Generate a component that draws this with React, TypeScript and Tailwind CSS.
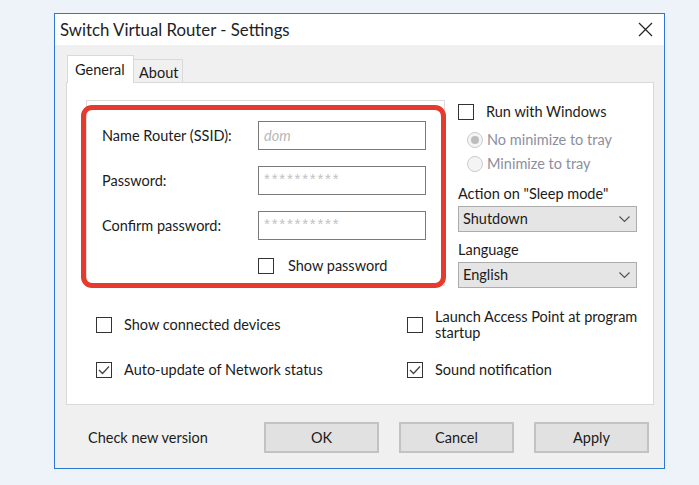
import { ReactNode } from "react";

const Checkbox = ({ checked = false }: { checked?: boolean }) => (
  <span className="w-[16px] h-[16px] shrink-0 border border-[#333333] bg-white flex items-center justify-center">
    {checked && (
      <svg width="12" height="10" viewBox="0 0 12 10" fill="none">
        <path d="M1 5 L4.5 8.5 L11 1.5" stroke="#444444" strokeWidth="1.3" />
      </svg>
    )}
  </span>
);

const Radio = ({ selected = false, label }: { selected?: boolean; label: string }) => (
  <div className="h-[24px] flex items-center pl-[9px] text-[#8d8f9e]">
    <span className="w-[16px] h-[16px] rounded-full border border-[#cccccc] bg-[#f4f4f4] flex items-center justify-center">
      {selected && <span className="w-[8px] h-[8px] rounded-full bg-[#bcbcbc]" />}
    </span>
    <span className="ml-[4px]">{label}</span>
  </div>
);

const Field = ({ label, value, italic }: { label: string; value: string; italic?: boolean }) => (
  <div className="flex items-center h-[29px]">
    <span className="w-[156px]">{label}</span>
    <div className="w-[168px] h-[29px] border border-[#7a7a7a] bg-white flex items-center px-[5px]">
      {italic ? (
        <span className="italic text-[#b8b8b8]">{value}</span>
      ) : (
        <span className="font-['Liberation_Sans',sans-serif] text-[15px] text-[#c2c2c2] tracking-[1.8px] -mt-[2px]">{value}</span>
      )}
    </div>
  </div>
);

const Select = ({ value }: { value: string }) => (
  <div className="w-[179px] h-[26px] border border-[#acacac] bg-[#e5e5e5] flex items-center justify-between pl-[4px] pr-[6px]">
    <span>{value}</span>
    <svg width="11" height="7" viewBox="0 0 11 7" fill="none">
      <path d="M0.5 0.5 L5.5 5.5 L10.5 0.5" stroke="#555555" strokeWidth="1.2" />
    </svg>
  </div>
);

const Option = ({ checked, children }: { checked?: boolean; children: ReactNode }) => (
  <div className="flex items-center gap-[12px]">
    <Checkbox checked={checked} />
    <span className="leading-[16px]">{children}</span>
  </div>
);

const Button = ({ children }: { children: ReactNode }) => (
  <button className="w-[115px] h-[31px] border-2 border-[#c2c2c2] bg-[#e1e1e1] text-[#1a1a1a]">{children}</button>
);

export default function App() {
  return (
    <div className="min-h-screen bg-[#eef3fa] pt-[13px] pl-[54px] text-[14.5px] text-[#1b1b1b] font-['Lato','Noto_Sans',sans-serif]">
      <div className="w-[611px] h-[456px] border border-[#2b78d0] bg-[#f0f0f0] flex flex-col">
        {/* title bar */}
        <div className="h-[31px] bg-white flex items-center justify-between pl-[5px] pr-[11px]">
          <span className="text-[16.8px] text-[#222222]">Switch Virtual Router - Settings</span>
          <svg width="15" height="15" viewBox="0 0 15 15" fill="none">
            <path d="M1 1 L14 14 M14 1 L1 14" stroke="#222222" strokeWidth="1.2" />
          </svg>
        </div>

        <div className="pl-[11px] pr-[10px] pt-[10px]">
          {/* tabs */}
          <div className="flex items-end h-[27px] pl-[1px]">
            <div className="relative z-10 w-[67px] h-[28px] -mb-px bg-white border border-b-0 border-[#d9d9d9] pl-[7px] pt-[3px]">
              General
            </div>
            <div className="w-[49px] h-[23px] border border-l-0 border-b-0 border-[#d9d9d9] bg-[#f0f0f0] pl-[5px] pt-[2px]">
              About
            </div>
          </div>

          {/* tab page */}
          <div className="h-[323px] bg-white border border-[#d9d9d9]">
            <div className="flex pt-[17px] pl-[19px]">
              {/* network group */}
              <div className="relative w-[359px] h-[186px] border border-[#dcdcdc]">
                <div className="flex flex-col gap-[16px] pl-[15px] pt-[20px]">
                  <Field label="Name Router (SSID):" value="dom" italic />
                  <Field label="Password:" value="**********" />
                  <Field label="Confirm password:" value="**********" />
                  <div className="flex items-center pl-[156px] -mt-[1px]">
                    <Checkbox />
                    <span className="ml-[14px]">Show password</span>
                  </div>
                </div>
                <div className="absolute left-[-6px] top-[4px] w-[365px] h-[183px] border-[5px] border-[#e53a2d] rounded-[11px]" />
              </div>

              {/* startup & misc */}
              <div className="ml-[13px] flex flex-col">
                <div className="h-[24px] flex items-center">
                  <Checkbox />
                  <span className="ml-[12px]">Run with Windows</span>
                </div>
                <div className="mt-[4px]">
                  <Radio selected label="No minimize to tray" />
                  <Radio label="Minimize to tray" />
                </div>
                <div className="h-[24px] mt-[6px] flex items-center">Action on "Sleep mode"</div>
                <Select value="Shutdown" />
                <div className="h-[24px] mt-[6px] flex items-center">Language</div>
                <Select value="English" />
              </div>
            </div>

            <div className="grid grid-cols-[311px_1fr] gap-y-[21px] pl-[29px] mt-[21px]">
              <div className="flex items-center">
                <Option>Show connected devices</Option>
              </div>
              <Option>
                Launch Access Point at program
                <br />
                startup
              </Option>
              <Option checked>Auto-update of Network status</Option>
              <Option checked>Sound notification</Option>
            </div>
          </div>

          {/* footer */}
          <div className="flex items-center mt-[17px]">
            <span className="w-[198px] pl-[22px]">Check new version</span>
            <div className="flex gap-[20px]">
              <Button>OK</Button>
              <Button>Cancel</Button>
              <Button>Apply</Button>
            </div>
          </div>
        </div>
      </div>
    </div>
  );
}
